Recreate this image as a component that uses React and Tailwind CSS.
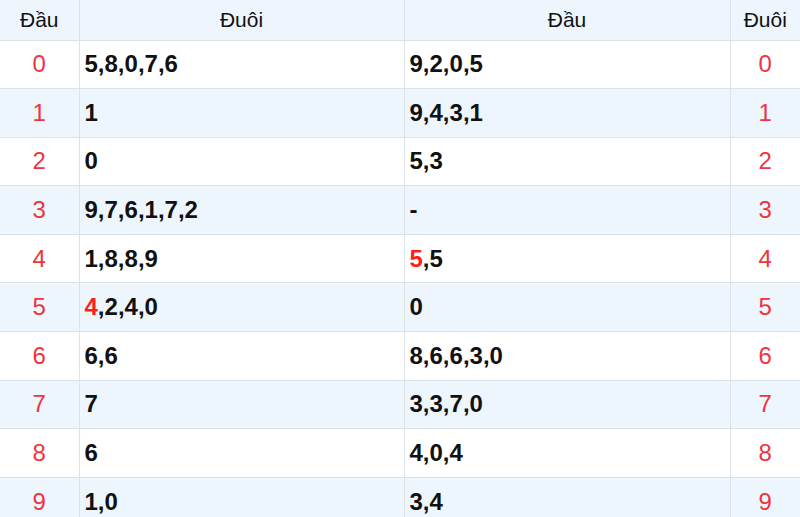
const rows = [
  { n: 0, duoi: "5,8,0,7,6", dau: "9,2,0,5" },
  { n: 1, duoi: "1", dau: "9,4,3,1" },
  { n: 2, duoi: "0", dau: "5,3" },
  { n: 3, duoi: "9,7,6,1,7,2", dau: "-" },
  { n: 4, duoi: "1,8,8,9", dau: "5,5", dauRed: true },
  { n: 5, duoi: "4,2,4,0", dau: "0", duoiRed: true },
  { n: 6, duoi: "6,6", dau: "8,6,6,3,0" },
  { n: 7, duoi: "7", dau: "3,3,7,0" },
  { n: 8, duoi: "6", dau: "4,0,4" },
  { n: 9, duoi: "1,0", dau: "3,4" },
];

function Nums({ text, red }) {
  if (!red) return <>{text}</>;
  const [first, ...rest] = text.split(",");
  return (
    <>
      <span className="text-[#ff1f1f]">{first}</span>,{rest.join(",")}
    </>
  );
}

export default function App() {
  return (
    <div className="w-[800px] h-[517px] overflow-hidden bg-white font-['Liberation_Sans',Arial,sans-serif]">
      <table className="w-[800px] table-fixed border-collapse">
        <colgroup>
          <col className="w-[79px]" />
          <col className="w-[325px]" />
          <col className="w-[326px]" />
          <col className="w-[70px]" />
        </colgroup>
        <thead>
          <tr className="h-[40px] bg-[#eef5fc] text-[21px] text-[#111]">
            <th className="font-normal border-r border-b border-[#dce2e8]">Đầu</th>
            <th className="font-normal border-x border-b border-[#dce2e8]">Đuôi</th>
            <th className="font-normal border-x border-b border-[#dce2e8]">Đầu</th>
            <th className="font-normal border-l border-b border-[#dce2e8]">Đuôi</th>
          </tr>
        </thead>
        <tbody>
          {rows.map((r) => (
            <tr
              key={r.n}
              className={`h-[48.6px] text-[24px] ${r.n % 2 ? "bg-[#eef6fd]" : "bg-white"}`}
            >
              <td className="border-r border-b border-[#dce2e8] text-center text-[#f0343c]">{r.n}</td>
              <td className="border-x border-b border-[#dce2e8] pl-[5px] font-bold text-[#111]">
                <Nums text={r.duoi} red={r.duoiRed} />
              </td>
              <td className="border-x border-b border-[#dce2e8] pl-[5px] font-bold text-[#111]">
                <Nums text={r.dau} red={r.dauRed} />
              </td>
              <td className="border-l border-b border-[#dce2e8] text-center text-[#f0343c]">{r.n}</td>
            </tr>
          ))}
        </tbody>
      </table>
    </div>
  );
}
